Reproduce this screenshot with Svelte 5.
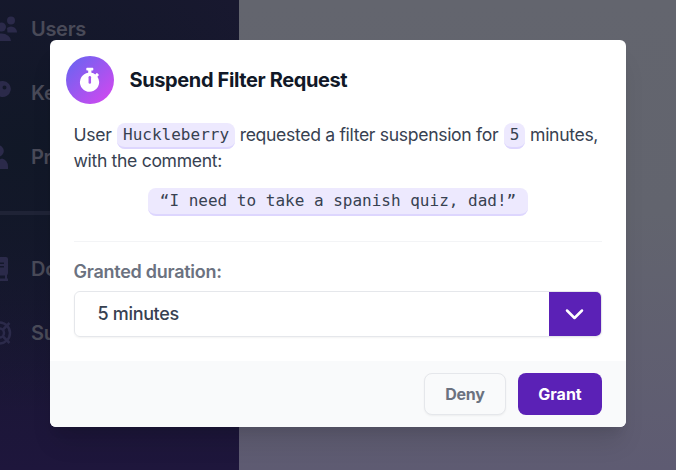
<script>
  let duration = $state('5 minutes');
  const main = [
    { label: 'Users', icon: 'users' },
    { label: 'Ke', icon: 'key' },
    { label: 'Pr', icon: 'person' },
  ];
  const extra = [
    { label: 'Do', icon: 'book' },
    { label: 'Su', icon: 'ring' },
  ];
</script>

{#snippet item(entry)}
  <div class="item">
    <svg class="ico" width="32" height="30" viewBox="0 0 32 30" fill="currentColor">
      {#if entry.icon === 'users'}
        <circle cx="26" cy="6.500" r="4" /><path d="M22 14a6 6 0 0 1 10 4q0 .5-.5.500H22.500z" />
        <circle cx="16.500" cy="13" r="4.500" /><path d="M7 27a9.500 7.500 0 0 1 19 0z" />
      {:else if entry.icon === 'key'}
        <path fill-rule="evenodd" d="M18 3a8 8 0 1 1-3 15.500L8 27H2v-5l8-8a8 8 0 0 1 8-11zM19.500 7.500a2 2 0 1 0 0 4 2 2 0 0 0 0-4z" />
      {:else if entry.icon === 'person'}
        <circle cx="13" cy="9" r="5.800" /><path d="M3 27v-2.500a7 8 0 0 1 6-8q4 2 8 0a7 8 0 0 1 6 8V27z" />
      {:else if entry.icon === 'book'}
        <path fill-rule="evenodd" d="M5 3h16q2 0 2 2v14q0 1.500-1 2v3.500h1V27H5a3 3 0 0 1-3-3V6a3 3 0 0 1 3-3zM8 8.500v1.500h11V8.500zM8 12v1.500h11V12zM6 21.500v3h14v-3z" />
      {:else}
        <g fill="none" stroke="currentColor" stroke-width="2.500">
          <circle cx="14.500" cy="15" r="10.500" /><circle cx="14.500" cy="15" r="4.500" />
          <path d="M6 6.500l5.500 5.500M17.500 18l7 7M24.500 5l-7 7M11.500 18l-5.500 5.500" />
        </g>
      {/if}
    </svg>
    <span>{entry.label}</span>
  </div>
{/snippet}

<div class="page">
  <aside>
    {#each main as entry}{@render item(entry)}{/each}
    <div class="rule"></div>
    {#each extra as entry}{@render item(entry)}{/each}
  </aside>
  <div class="content"></div>

  <div class="overlay">
    <section class="modal">
      <header>
        <div class="badge">
          <svg width="22" height="26" viewBox="0 0 22 26">
            <path fill="#fff" d="M7.300 1.500q0-.700.700-.700h5.600q.700 0 .700.700v1.200q0 .700-.700.700h-1.200v2.300a9.400 9.400 0 0 1 3.900 1.700l1.100-1.100q.5-.5 1 0l1.200 1.200q.5.500 0 1l-1.200 1.200a9.600 9.600 0 1 1-9.200-4V3.400H8q-.700 0-.700-.700z" />
            <path d="M10.800 10.200v5.300" stroke="#a85af0" stroke-width="2.500" stroke-linecap="round" />
          </svg>
        </div>
        <h2>Suspend Filter Request</h2>
      </header>
      <div class="body">
        <p>
          User <code>Huckleberry</code> requested a filter suspension for <code>5</code> minutes, with the comment:
        </p>
        <div class="quote"><code>“I need to take a spanish quiz, dad!”</code></div>
        <hr />
        <div class="label">Granted duration:</div>
        <div class="select">
          <span>{duration}</span>
          <button aria-label="Choose duration">
            <svg width="20" height="12" viewBox="0 0 20 12" fill="none" stroke="#fff" stroke-width="2.500" stroke-linecap="round" stroke-linejoin="round">
              <path d="M2 2.500l7.500 7.500L17 2.500" />
            </svg>
          </button>
        </div>
      </div>
      <footer>
        <button class="deny">Deny</button>
        <button class="grant">Grant</button>
      </footer>
    </section>
  </div>
</div>

<style>
  :global(body) { overflow: hidden; }
  .page, .page * { box-sizing: border-box; }
  .page {
    position: relative;
    display: flex;
    width: 676px;
    height: 470px;
    font-family: Inter, 'Liberation Sans', sans-serif;
    overflow: hidden;
  }
  aside {
    width: 239px;
    padding-top: 5px;
    background: radial-gradient(circle at 20px 150px, #111827 0, transparent 260px), linear-gradient(180deg, #18182f 0, #17172f 50%, #1e163c 100%);
    color: #494a58;
  }
  .item {
    display: flex;
    align-items: center;
    gap: 14px;
    height: 48px;
    margin: 0 0 16px -15px;
    font-size: 20px;
    font-weight: 600;
    letter-spacing: -.3px;
  }
  .ico { color: #2b2a4a; flex: none; }
  .rule { height: 4px; margin: 30px 16px 30px 0; background: #1f2336; }
  .content { flex: 1; background: linear-gradient(180deg, #63656e 0, #62646e 45%, #5e5b72 100%); }
  .overlay { position: absolute; inset: 0; padding: 40px 50px; }
  .modal {
    height: 387px;
    display: flex;
    flex-direction: column;
    background: #fff;
    border-radius: 6px;
    overflow: hidden;
    box-shadow: 0 20px 25px -5px rgba(0, 0, 0, .1), 0 10px 10px -5px rgba(0, 0, 0, .06);
  }
  header { display: flex; align-items: center; gap: 15.500px; padding: 16px 16px 0; }
  .badge {
    display: flex;
    align-items: center;
    justify-content: center;
    width: 48px;
    height: 48px;
    border-radius: 50%;
    background: linear-gradient(135deg, #6366f1, #d946ef);
  }
  h2 { margin: 0; font-size: 20px; line-height: 28px; font-weight: 700; letter-spacing: -.38px; color: #111827; }
  .body { flex: 1; padding: 18px 24px 0; }
  p { height: 53px; margin: 0 -2px 0 -.5px; font-size: 17.600px; line-height: 26px; letter-spacing: -.33px; color: #374151; }
  code {
    font-family: 'DejaVu Sans Mono', monospace;
    font-size: 16px;
    letter-spacing: 0;
    padding: 2px 6px 3px;
    border-radius: 8px;
    border-bottom: 2px solid #ddd6fe;
    background: #ede9fe;
    color: #374151;
  }
  p code { position: relative; top: -1px; margin-left: 1px; line-height: 1; }
  .quote { display: flex; justify-content: center; margin-top: 13px; }
  .quote code { height: 28px; padding: 0 12px; line-height: 26px; }
  hr { height: 1px; margin: 25px 0 18px; border: 0; background: #f3f4f6; }
  .label { margin-left: -.5px; font-size: 18px; line-height: 24px; font-weight: 600; letter-spacing: -.27px; color: #6b7280; }
  .select {
    display: flex;
    align-items: stretch;
    height: 46px;
    margin-top: 7px;
    border: 1px solid #e5e7eb;
    border-radius: 6px;
    overflow: hidden;
    box-shadow: 0 1px 2px rgba(0, 0, 0, .05);
  }
  .select span { flex: 1; padding-left: 22.500px; font-size: 18px; line-height: 44px; font-weight: 500; letter-spacing: -.33px; color: #374151; }
  .select button {
    display: flex;
    align-items: center;
    justify-content: center;
    width: 52px;
    padding: 0;
    border: 0;
    background: #5b21b6;
  }
  footer {
    display: flex;
    justify-content: flex-end;
    gap: 12px;
    height: 66px;
    padding: 12px 24px;
    background: #f9fafb;
  }
  footer button {
    height: 42px;
    padding: 0;
    border-radius: 8px;
    font-family: inherit;
    font-size: 16px;
    font-weight: 700;
  }
  .deny { width: 82px; border: 1px solid #e5e7eb; background: #f9fafb; color: #6b7280; letter-spacing: -.2px; box-shadow: 0 1px 2px rgba(0, 0, 0, .05); }
  .grant { width: 84px; border: 0; background: #5b21b6; color: #fff; }
</style>
